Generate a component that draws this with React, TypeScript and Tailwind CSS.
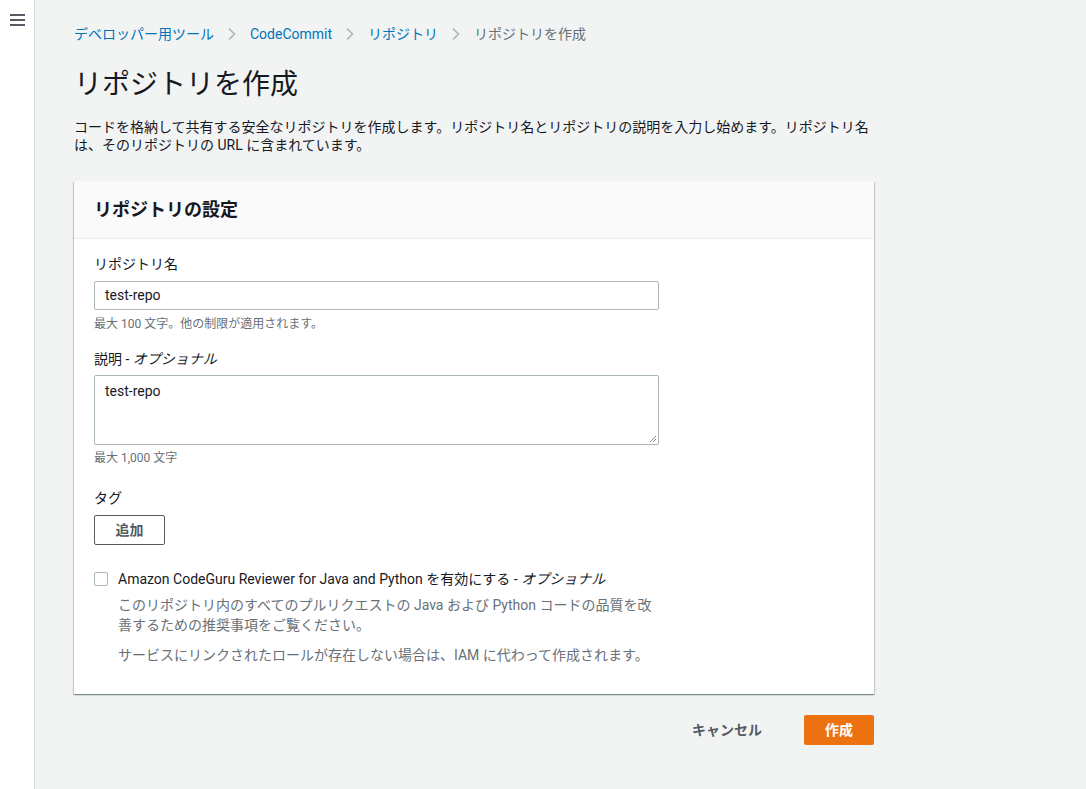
import React from "react";

const font = { fontFamily: 'Roboto, "Noto Sans CJK JP", sans-serif' };

function Chevron() {
  return (
    <svg width="10" height="14" viewBox="0 0 10 14" className="mx-[13px]">
      <path d="M2 1.5 L7.5 7 L2 12.5" fill="none" stroke="#aab7b8" strokeWidth="1.6" />
    </svg>
  );
}

export default function App() {
  return (
    <div className="flex min-h-[789px] w-full bg-[#f2f3f3] text-[#16191f]" style={font}>
      <div className="w-[35px] shrink-0 bg-white border-r border-[#d5dbdb] flex justify-center pt-[14px]">
        <svg width="15" height="12" viewBox="0 0 15 12">
          <rect x="0" y="0" width="15" height="2" fill="#545b64" />
          <rect x="0" y="5" width="15" height="2" fill="#545b64" />
          <rect x="0" y="10" width="15" height="2" fill="#545b64" />
        </svg>
      </div>
      <div className="flex-1 pl-[39px] pt-[25px]">
        <div className="w-[800px]">
          <nav className="flex items-center text-[14px] leading-[18px] h-[18px]">
            <span className="text-[#0073bb]">デベロッパー用ツール</span>
            <Chevron />
            <span className="text-[#0073bb]">CodeCommit</span>
            <Chevron />
            <span className="text-[#0073bb]">リポジトリ</span>
            <Chevron />
            <span className="text-[#687078]">リポジトリを作成</span>
          </nav>
          <h1 className="mt-[24px] text-[28px] leading-[36px] font-normal text-[#16191f]">リポジトリを作成</h1>
          <p className="mt-[15px] text-[14px] leading-[18px] text-[#16191f] w-[820px] whitespace-nowrap">
            コードを格納して共有する安全なリポジトリを作成します。リポジトリ名とリポジトリの説明を入力し始めます。リポジトリ名
            <br />
            は、そのリポジトリの URL に含まれています。
          </p>
          <div className="mt-[27px] bg-white shadow-[0_1px_1px_0_rgba(0,28,36,0.3),1px_1px_1px_0_rgba(0,28,36,0.15),-1px_1px_1px_0_rgba(0,28,36,0.15)]">
            <div className="h-[58px] bg-[#fafafa] border-b border-[#eaeded] flex items-center px-[20px]">
              <h2 className="text-[18px] font-bold leading-[22px]">リポジトリの設定</h2>
            </div>
            <div className="px-[20px] pt-[14px] pb-[29px]">
              <div className="text-[14px] leading-[22px]">リポジトリ名</div>
              <div className="mt-[6px] w-[565px] h-[29px] border border-[#aab7b8] rounded-[2px] flex items-center px-[10px] text-[14px]">
                test-repo
              </div>
              <div className="mt-[6px] text-[12px] leading-[16px] text-[#687078]">最大 100 文字。他の制限が適用されます。</div>
              <div className="mt-[16px] text-[14px] leading-[22px]">
                説明 - <i>オプショナル</i>
              </div>
              <div className="mt-[5px] relative w-[565px] h-[70px] border border-[#aab7b8] rounded-[2px] px-[10px] pt-[5px] text-[14px] leading-[20px]">
                test-repo
                <svg width="8" height="8" viewBox="0 0 8 8" className="absolute right-[1px] bottom-[1px]">
                  <path d="M7 1 L1 7 M7 4 L4 7" stroke="#777" strokeWidth="0.8" />
                </svg>
              </div>
              <div className="mt-[5px] text-[12px] leading-[16px] text-[#687078]">最大 1,000 文字</div>
              <div className="mt-[21px] text-[14px] leading-[22px]">タグ</div>
              <button className="mt-[6px] w-[71px] h-[30px] border border-[#545b64] rounded-[2px] text-[14px] font-bold text-[#545b64] bg-white">
                追加
              </button>
              <div className="mt-[25px] flex items-start">
                <div className="w-[14px] h-[14px] mt-[2px] border border-[#aab7b8] rounded-[2px] bg-white shrink-0" />
                <div className="ml-[10px]">
                  <div className="text-[14px] leading-[18px]">
                    Amazon CodeGuru Reviewer for Java and Python を有効にする - <i>オプショナル</i>
                  </div>
                  <div className="mt-[7px] text-[14px] leading-[20px] text-[#687078] whitespace-nowrap">
                    このリポジトリ内のすべてのプルリクエストの Java および Python コードの品質を改
                    <br />
                    善するための推奨事項をご覧ください。
                  </div>
                  <div className="mt-[10px] text-[14px] leading-[20px] text-[#687078]">
                    サービスにリンクされたロールが存在しない場合は、IAM に代わって作成されます。
                  </div>
                </div>
              </div>
            </div>
          </div>
          <div className="mt-[21px] flex justify-end items-center">
            <button className="h-[30px] px-[20px] text-[14px] font-bold text-[#545b64]">キャンセル</button>
            <button className="ml-[22px] w-[70px] h-[30px] rounded-[2px] bg-[#ec7211] text-white text-[14px] font-bold">
              作成
            </button>
          </div>
        </div>
      </div>
    </div>
  );
}
